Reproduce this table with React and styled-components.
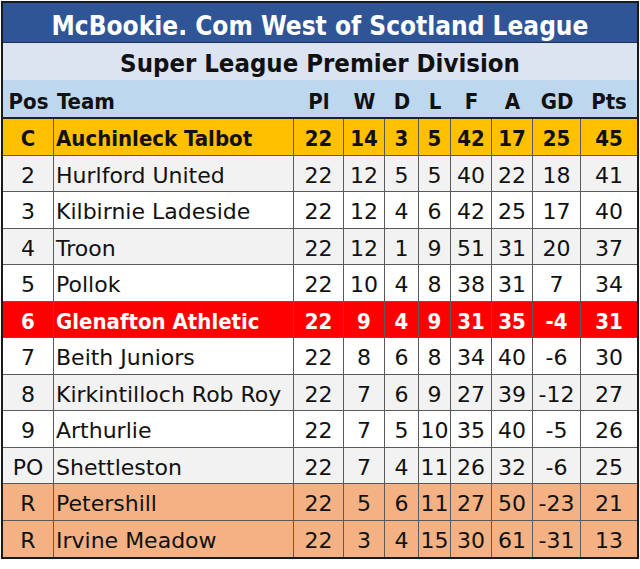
import React from 'react';
import styled, { createGlobalStyle } from 'styled-components';

const Global = createGlobalStyle`
  html, body { margin: 0; padding: 0; background: #ffffff; }
  body { font-family: "DejaVu Sans", Verdana, sans-serif; }
`;

const COLS = '51px 240px 50px 41px 34px 32px 41px 41px 48px 1fr';
const BOLD_FONT = '"DejaVu Sans Condensed", "DejaVu Sans", sans-serif';

const Frame = styled.div`
  width: 634px;
  margin: 1px 0 0 1px;
  border: 2px solid #1b1b1b;
  background: #ffffff;
`;

const Title = styled.div`
  height: 40px;
  box-sizing: border-box;
  padding-top: 6px;
  background: #2f5597;
  color: #ffffff;
  border-bottom: 1px solid #1f2f4f;
  display: flex;
  align-items: center;
  justify-content: center;
  font-family: ${BOLD_FONT};
  font-stretch: condensed;
  font-weight: 700;
  font-size: 26px;
`;

const Subtitle = styled.div`
  height: 37px;
  box-sizing: border-box;
  padding-top: 2px;
  background: #dce3f1;
  color: #111111;
  display: flex;
  align-items: center;
  justify-content: center;
  font-family: ${BOLD_FONT};
  font-stretch: condensed;
  font-weight: 700;
  font-size: 25.5px;
`;

const HeaderRow = styled.div`
  display: grid;
  grid-template-columns: ${COLS};
  height: 37px;
  background: #bdd7ee;
  border-bottom: 2px solid #222222;
  color: #111111;
  font-family: ${BOLD_FONT};
  font-stretch: condensed;
  font-weight: 700;
  font-size: 22px;
`;

const HeadCell = styled.div`
  display: flex;
  align-items: center;
  justify-content: ${(p) => (p.$left ? 'flex-start' : 'center')};
  padding-left: ${(p) => (p.$left ? '3px' : '0')};
  padding-top: 5px;
`;

const Body = styled.div`
  display: grid;
  grid-template-rows: repeat(12, 36.5px);
`;

const variants = {
  champ: { bg: '#ffc000', fg: '#111111', bold: true },
  red: { bg: '#ff0000', fg: '#ffffff', bold: true },
  grey: { bg: '#f2f2f2', fg: '#111111', bold: false },
  white: { bg: '#ffffff', fg: '#111111', bold: false },
  rel: { bg: '#f4b183', fg: '#111111', bold: false },
};

const Row = styled.div`
  display: grid;
  grid-template-columns: ${COLS};
  background: ${(p) => variants[p.$v].bg};
  color: ${(p) => variants[p.$v].fg};
  border-bottom: 1px solid #5a5a5a;
  &:last-child { border-bottom: none; }
  font-size: 22px;
  font-weight: ${(p) => (variants[p.$v].bold ? 700 : 400)};
  font-family: ${(p) => (variants[p.$v].bold ? BOLD_FONT : '"DejaVu Sans", sans-serif')};
  font-stretch: ${(p) => (variants[p.$v].bold ? 'condensed' : 'normal')};
`;

const Cell = styled.div`
  display: flex;
  align-items: center;
  justify-content: ${(p) => (p.$left ? 'flex-start' : 'center')};
  padding-left: ${(p) => (p.$left ? '2px' : '0')};
  padding-top: 4px;
  border-right: 1px solid #5a5a5a;
  white-space: nowrap;
  overflow: hidden;
  &:last-child { border-right: none; }
`;

const HEAD = ['Pos', 'Team', 'Pl', 'W', 'D', 'L', 'F', 'A', 'GD', 'Pts'];

const ROWS = [
  ['C', 'Auchinleck Talbot', 22, 14, 3, 5, 42, 17, 25, 45, 'champ'],
  ['2', 'Hurlford United', 22, 12, 5, 5, 40, 22, 18, 41, 'grey'],
  ['3', 'Kilbirnie Ladeside', 22, 12, 4, 6, 42, 25, 17, 40, 'white'],
  ['4', 'Troon', 22, 12, 1, 9, 51, 31, 20, 37, 'grey'],
  ['5', 'Pollok', 22, 10, 4, 8, 38, 31, 7, 34, 'white'],
  ['6', 'Glenafton Athletic', 22, 9, 4, 9, 31, 35, -4, 31, 'red'],
  ['7', 'Beith Juniors', 22, 8, 6, 8, 34, 40, -6, 30, 'white'],
  ['8', 'Kirkintilloch Rob Roy', 22, 7, 6, 9, 27, 39, -12, 27, 'grey'],
  ['9', 'Arthurlie', 22, 7, 5, 10, 35, 40, -5, 26, 'white'],
  ['PO', 'Shettleston', 22, 7, 4, 11, 26, 32, -6, 25, 'grey'],
  ['R', 'Petershill', 22, 5, 6, 11, 27, 50, -23, 21, 'rel'],
  ['R', 'Irvine Meadow', 22, 3, 4, 15, 30, 61, -31, 13, 'rel'],
];

export default function App() {
  return (
    <>
      <Global />
      <Frame>
        <Title>McBookie. Com West of Scotland League</Title>
        <Subtitle>Super League Premier Division</Subtitle>
        <HeaderRow>
          {HEAD.map((h, i) => (
            <HeadCell key={h} $left={i === 1}>{h}</HeadCell>
          ))}
        </HeaderRow>
        <Body>
          {ROWS.map((r) => {
            const v = r[10];
            return (
              <Row key={r[1]} $v={v}>
                {r.slice(0, 10).map((c, i) => (
                  <Cell key={i} $left={i === 1}>{c}</Cell>
                ))}
              </Row>
            );
          })}
        </Body>
      </Frame>
    </>
  );
}
